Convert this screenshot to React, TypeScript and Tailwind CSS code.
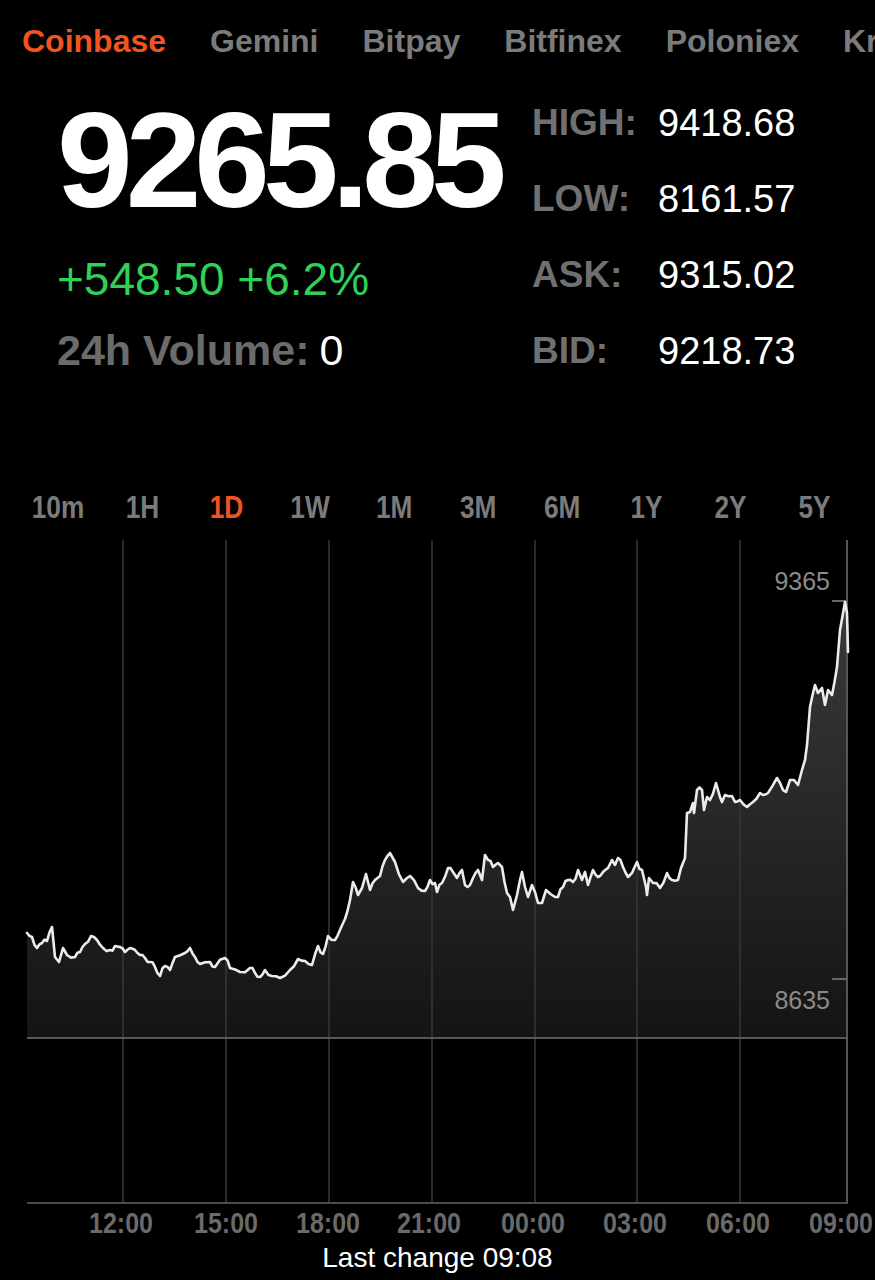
import React from "react";

const RAW: [number, number][] = [
  [27,933],[32,937],[37,948],[42,943],[47,941],[52,927],[55,957],[59,962],[63,948],[67,955],[75,957],[80,952],[85,944],[91,936],[97,940],[103,948],[110,950],[115,946],[120,947],[125,952],[130,948],[135,950],[140,955],[145,958],[150,962],[155,967],[160,976],[165,966],[170,970],[175,957],[185,953],[190,948],[195,957],[200,964],[210,962],[215,967],[225,958],[230,968],[240,972],[250,968],[255,973],[260,977],[265,970],[272,976],[280,978],[290,970],[298,959],[305,961],[312,965],[318,946],[323,954],[328,936],[335,940],[340,930],[345,919],[350,900],[353,882],[358,895],[362,888],[366,874],[370,890],[375,880],[380,876],[385,860],[390,853],[395,862],[403,882],[410,876],[418,888],[425,891],[430,880],[435,883],[437,892],[442,883],[448,868],[453,872],[457,878],[462,870],[465,885],[470,885],[473,878],[478,870],[482,880],[485,855],[488,860],[493,867],[498,863],[502,867],[507,893],[510,897],[513,910],[517,895],[520,880],[522,872],[525,887],[528,897],[532,885],[535,892],[538,903],[542,903],[546,890],[555,897],[558,897],[563,887],[568,880],[573,882],[578,870],[582,880],[585,872],[588,885],[593,870],[598,877],[603,872],[608,868],[612,860],[615,865],[618,858],[623,867],[628,877],[632,873],[637,862],[642,870],[646,887],[647,895],[649,878],[653,883],[660,888],[667,873],[672,880],[678,880],[681,868],[685,858],[687,813],[690,812],[693,803],[694,813],[697,790],[702,790],[704,810],[707,797],[710,800],[716,783],[720,797],[722,802],[725,795],[732,796],[735,802],[740,800],[747,807],[753,802],[760,793],[763,795],[768,793],[777,778],[780,783],[786,792],[790,780],[798,785],[802,770],[805,760],[807,745],[810,707],[815,685],[818,693],[822,688],[825,705],[828,690],[832,695],[837,667],[840,630],[845,602],[847,613],[848,652]
];

function densify(pts: [number, number][]): [number, number][] {
  let seed = 11;
  const rnd = () => {
    seed = (seed * 9301 + 49297) % 233280;
    return seed / 233280;
  };
  const out: [number, number][] = [];
  for (let i = 0; i < pts.length; i++) {
    out.push(pts[i]);
    const n = pts[i + 1];
    if (n && n[0] - pts[i][0] > 4) {
      out.push([(pts[i][0] + n[0]) / 2, (pts[i][1] + n[1]) / 2 + (rnd() - 0.5) * 6]);
    }
  }
  return out;
}

const PTS = densify(RAW);
const LINE = PTS.map((p, i) => `${i === 0 ? "M" : "L"}${p[0].toFixed(1)},${p[1].toFixed(1)}`).join(" ");
const AREA = `${LINE} L848,1038 L27,1038 Z`;

const FONT = { fontFamily: "'Liberation Sans', Arial, sans-serif" };

const exchanges = ["Coinbase", "Gemini", "Bitpay", "Bitfinex", "Poloniex", "Kraken"];
const ranges = ["10m", "1H", "1D", "1W", "1M", "3M", "6M", "1Y", "2Y", "5Y"];
const stats: [string, string][] = [
  ["HIGH:", "9418.68"],
  ["LOW:", "8161.57"],
  ["ASK:", "9315.02"],
  ["BID:", "9218.73"],
];
const grid = [123, 226, 329, 432, 535, 637, 740];
const times: [string, number][] = [
  ["12:00", 121],
  ["15:00", 226],
  ["18:00", 328],
  ["21:00", 429],
  ["00:00", 533],
  ["03:00", 635],
  ["06:00", 738],
  ["09:00", 841],
];

export default function App() {
  return (
    <div className="w-[875px] h-[1280px] bg-black overflow-hidden text-white" style={FONT}>
      {/* exchange tabs */}
      <div className="flex gap-[44px] pl-[22px] pt-[21px] whitespace-nowrap w-[875px] overflow-x-hidden">
        {exchanges.map((e, i) => (
          <span
            key={e}
            className={`shrink-0 text-[32px] leading-[40px] font-bold ${i === 0 ? "text-[#f3541f]" : "text-[#7b7b7b]"}`}
          >
            {e}
          </span>
        ))}
      </div>

      {/* quote */}
      <div className="flex mt-[24px] pl-[57px]">
        <div className="w-[475px] pt-[7px]">
          <div className="text-[136px] leading-[136px] font-bold tracking-[-7px] text-white">9265.85</div>
          <div className="mt-[28px] text-[46px] leading-[46px] text-[#2fd159]">+548.50 +6.2%</div>
          <div className="mt-[27px] text-[43px] leading-[43px] whitespace-nowrap">
            <span className="font-bold text-[#6b6b6b]">24h Volume:</span>
            <span className="ml-[10px] text-white">0</span>
          </div>
        </div>
        <div className="flex flex-col">
          {stats.map(([k, v]) => (
            <div key={k} className="flex h-[76px] items-center leading-[76px]">
              <span className="w-[126px] text-[37px] font-bold text-[#707070]">{k}</span>
              <span className="text-[38px] text-white">{v}</span>
            </div>
          ))}
        </div>
      </div>

      {/* range tabs */}
      <div className="grid grid-cols-10 pl-[16px] pr-[18px] mt-[102px]">
        {ranges.map((r) => (
          <div key={r} className="flex justify-center">
            <span
              className={`inline-block scale-x-[0.82] text-[32px] leading-[32px] font-bold ${r === "1D" ? "text-[#f3541f]" : "text-[#7b7b7b]"}`}
            >
              {r}
            </span>
          </div>
        ))}
      </div>

      {/* chart */}
      <svg className="block mt-[17px]" width={875} height={700} viewBox="0 540 875 700">
        <defs>
          <linearGradient id="fillg" gradientUnits="userSpaceOnUse" x1="0" y1="600" x2="0" y2="1038">
            <stop offset="0" stopColor="#3a3a3a" />
            <stop offset="1" stopColor="#141414" />
          </linearGradient>
        </defs>
        <path d={AREA} fill="url(#fillg)" />
        {grid.map((x) => (
          <line key={x} x1={x} y1={540} x2={x} y2={1203} stroke="#353538" strokeWidth={1.6} />
        ))}
        <line x1={847} y1={540} x2={847} y2={1204} stroke="#55555c" strokeWidth={2} />
        <line x1={27} y1={1038} x2={848} y2={1038} stroke="#575762" strokeWidth={2} />
        <line x1={27} y1={1203} x2={848} y2={1203} stroke="#4a4a52" strokeWidth={2} />
        <line x1={832} y1={601} x2={847} y2={601} stroke="#666" strokeWidth={2} />
        <line x1={832} y1={979} x2={847} y2={979} stroke="#666" strokeWidth={2} />
        <path d={LINE} fill="none" stroke="#ececec" strokeWidth={2.6} strokeLinejoin="round" strokeLinecap="round" />
        <text x={830} y={590} textAnchor="end" fontSize={25} fill="#8a8a8a" style={FONT}>
          9365
        </text>
        <text x={830} y={1009} textAnchor="end" fontSize={25} fill="#8a8a8a" style={FONT}>
          8635
        </text>
        {times.map(([t, x]) => (
          <text
            key={t}
            x={x - 32}
            y={1233}
            textLength={64}
            lengthAdjust="spacingAndGlyphs"
            fontSize={30}
            fontWeight={700}
            fill="#6a6a6a"
            style={FONT}
          >
            {t}
          </text>
        ))}
      </svg>

      <div className="mt-[4px] text-center text-[28px] leading-[28px] text-white">Last change 09:08</div>
    </div>
  );
}
